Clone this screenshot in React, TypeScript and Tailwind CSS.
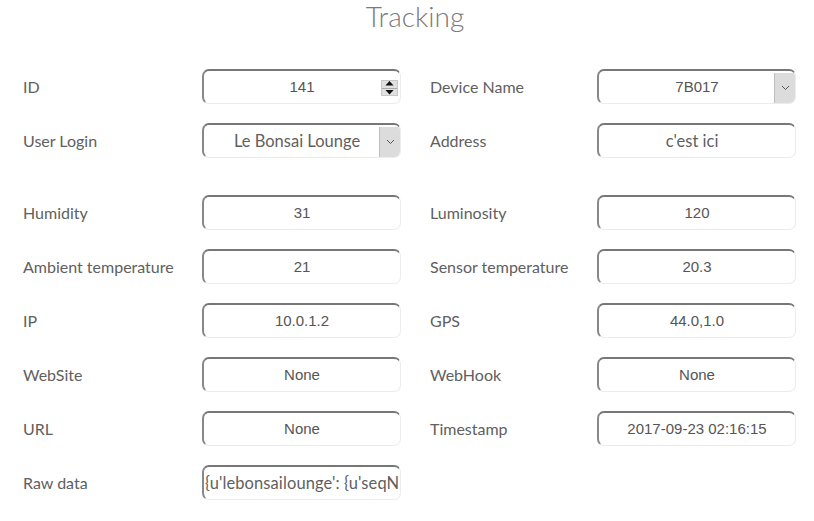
const labelFont = { fontFamily: 'Lato, "Open Sans", sans-serif' };

type Field = { label: string; value: string; kind?: 'spin' | 'select' | 'text'; font?: 'sans' | 'arial' };

const rows: [Field, Field | null][] = [
  [{ label: 'ID', value: '141', kind: 'spin' }, { label: 'Device Name', value: '7B017', kind: 'select' }],
  [{ label: 'User Login', value: 'Le Bonsai Lounge', kind: 'select', font: 'sans' }, { label: 'Address', value: "c'est ici", font: 'sans' }],
  [{ label: 'Humidity', value: '31' }, { label: 'Luminosity', value: '120' }],
  [{ label: 'Ambient temperature', value: '21' }, { label: 'Sensor temperature', value: '20.3' }],
  [{ label: 'IP', value: '10.0.1.2' }, { label: 'GPS', value: '44.0,1.0' }],
  [{ label: 'WebSite', value: 'None' }, { label: 'WebHook', value: 'None' }],
  [{ label: 'URL', value: 'None' }, { label: 'Timestamp', value: '2017-09-23 02:16:15' }],
  [{ label: 'Raw data', value: "{u'lebonsailounge': {u'seqN", font: 'sans' }, null],
];

function Box({ field }: { field: Field }) {
  const isRaw = field.label === 'Raw data';
  return (
    <div className="relative h-[35px] w-[199px] rounded-[7px] border-t-2 border-l-2 border-r border-b border-t-[#777] border-l-[#888] border-r-[#ececec] border-b-[#ececec] bg-white flex items-center overflow-hidden">
      <div
        className={
          isRaw
            ? 'pl-[1px] whitespace-nowrap text-[16.5px] tracking-[0.1px] text-[#5f5f5f]'
            : `flex-1 text-center whitespace-nowrap ${field.font === 'sans' ? 'text-[16.5px] text-[#5f5f5f] pr-[10px]' : 'text-[15px] text-[#555]'}`
        }
        style={field.font === 'sans' ? labelFont : { fontFamily: '"Liberation Sans", Arial, sans-serif' }}
      >
        {field.value}
      </div>
      {field.kind === 'spin' && (
        <div className="absolute right-[2px] top-[9px] w-[17px] h-[16px] bg-[#e1e1e1] border border-[#c8c8c8] flex flex-col items-center justify-center gap-[2px]">
          <svg width="9" height="5" viewBox="0 0 9 5"><path d="M4.5 0 L9 5 L0 5 Z" fill="#111" /></svg>
          <div className="w-full h-px bg-[#aaa]" />
          <svg width="9" height="5" viewBox="0 0 9 5"><path d="M0 0 L9 0 L4.5 5 Z" fill="#111" /></svg>
        </div>
      )}
      {field.kind === 'select' && (
        <div className="absolute right-0 top-[2px] bottom-0 w-[21px] bg-[#dcdcdc] border-l border-[#bdbdbd] flex items-center justify-center">
          <svg width="9" height="6" viewBox="0 0 9 6"><path d="M1 1 L4.5 4.5 L8 1" fill="none" stroke="#555" strokeWidth="1" /></svg>
        </div>
      )}
    </div>
  );
}

export default function App() {
  return (
    <div className="w-[814px] h-[521px] bg-white" style={labelFont}>
      <h1 className="text-center text-[28px] leading-[32px] text-[#7a7a7a] font-light ml-[16px]">Tracking</h1>
      <div className="pl-[23px] pt-[37px] grid grid-cols-[179px_199px_196px_199px] gap-y-[19px] text-[16px] text-[#606060]">
        {rows.map(([a, b], i) => (
          <div key={a.label} className="contents">
            <div className={`flex items-center ${i === 2 ? 'mt-[18px]' : ''}`}>{a.label}</div>
            <div className={i === 2 ? 'mt-[18px]' : ''}><Box field={a} /></div>
            <div className={`flex items-center pl-[29px] ${i === 2 ? 'mt-[18px]' : ''}`}>{b ? b.label : ''}</div>
            <div className={i === 2 ? 'mt-[18px]' : ''}>{b && <Box field={b} />}</div>
          </div>
        ))}
      </div>
    </div>
  );
}
